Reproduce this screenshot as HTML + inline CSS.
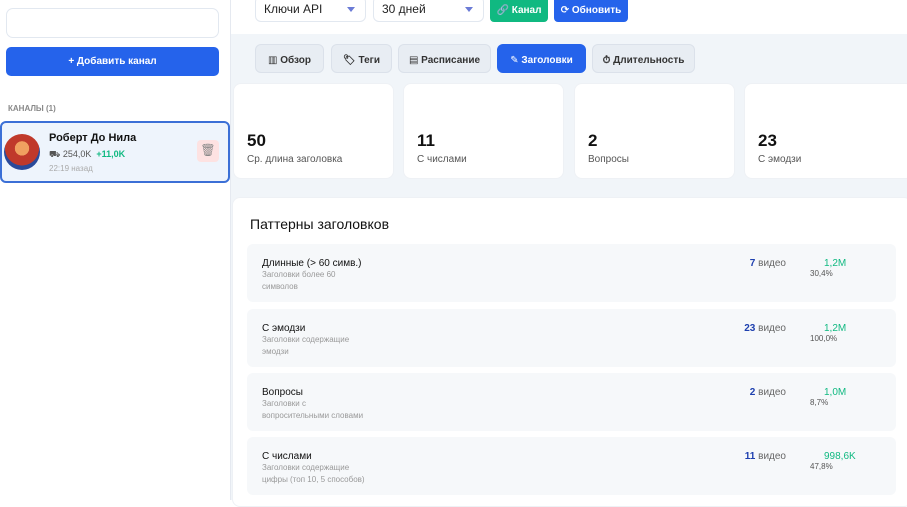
<!DOCTYPE html>
<html><head><meta charset="utf-8"><style>
*{box-sizing:border-box;margin:0;padding:0}
body{width:907px;height:500px;overflow:hidden;font-family:"Liberation Sans","DejaVu Sans",sans-serif;background:#fff;position:relative;color:#111}
.abs{position:absolute}
.side{left:0;top:0;width:231px;height:500px;background:#fff;border-right:1px solid #e5e9f0}
.main{left:231px;top:34px;width:676px;height:466px;background:#f1f5f9}
.sel{top:-4px;height:26px;border:1px solid #e2e8f0;border-radius:6px;background:#fff;font-size:12px;line-height:24px;padding-left:8px;color:#222}
.sel i{position:absolute;right:10px;top:10px;width:0;height:0;border-left:4px solid transparent;border-right:4px solid transparent;border-top:5px solid #6b7bd6}
.btn{top:-4px;height:26px;border-radius:4px;color:#fff;font-size:10px;font-weight:bold;line-height:30px;text-align:center}
.tab{top:44px;height:29px;border:1px solid #dbe1ea;border-radius:6px;background:#e8edf3;font-size:10px;font-weight:bold;color:#333;text-align:center;line-height:31px}
.tab.on{background:#2563eb;color:#fff;border-color:#2563eb}
.card{top:83px;height:96px;background:#fff;border-radius:8px;border:1px solid #eef1f5}
.card b{position:absolute;left:13px;top:47px;font-size:17px}
.card span{position:absolute;left:13px;top:70px;font-size:10px;color:#555}
.row{left:247px;width:649px;height:58px;background:#f6f8fa;border-radius:6px}
.row .t{position:absolute;left:15px;top:14px;font-size:10px;color:#111}
.row .d{position:absolute;left:15px;top:25px;font-size:8px;color:#999;line-height:12px;width:110px}
.row .v{position:absolute;right:110px;top:14px;font-size:10px;color:#666}
.row .v b{color:#1e40af}
.row .g{position:absolute;left:577px;top:14px;font-size:10px;color:#10b981}
.row .p{position:absolute;left:563px;top:25px;font-size:8px;color:#555}
</style></head><body>
<div class="abs side"></div>
<div class="abs" style="left:6px;top:8px;width:213px;height:30px;border:1px solid #e2e8f0;border-radius:7px"></div>
<div class="abs" style="left:6px;top:47px;width:213px;height:29px;background:#2563eb;border-radius:5px;color:#fff;font-size:10px;font-weight:bold;text-align:center;line-height:30px">+ Добавить канал</div>
<div class="abs" style="left:8px;top:104px;font-size:8px;color:#888;font-weight:bold">КАНАЛЫ (1)</div>
<div class="abs" style="left:0;top:121px;width:230px;height:62px;background:#eef4fc;border:2px solid #3b6fd6;border-radius:6px"></div>
<div class="abs" style="left:4px;top:134px;width:36px;height:36px;border-radius:50%;background:radial-gradient(circle at 50% 40%,#f0a060 0 25%,#c0392b 26% 60%,#2a4a9a 61%)"></div>
<div class="abs" style="left:49px;top:132px;font-size:11px;font-weight:bold">Роберт До Нила</div>
<div class="abs" style="left:49px;top:149px;font-size:9px;color:#555">⛟ 254,0K &nbsp;<span style="color:#10b981;font-weight:bold">+11,0K</span></div>
<div class="abs" style="left:49px;top:164px;font-size:8px;color:#aaa">22:19 назад</div>
<div class="abs" style="left:197px;top:140px;width:22px;height:22px;background:#fde2e2;border-radius:4px;text-align:center;font-size:12px;padding-top:3px;color:#888">🗑</div>

<div class="abs main"></div>
<div class="abs sel" style="left:255px;width:111px">Ключи API<i></i></div>
<div class="abs sel" style="left:373px;width:111px">30 дней<i></i></div>
<div class="abs btn" style="left:490px;width:58px;background:#10b981">🔗 Канал</div>
<div class="abs btn" style="left:554px;width:74px;background:#2563eb">⟳ Обновить</div>

<div class="abs tab" style="left:255px;width:69px">▥ Обзор</div>
<div class="abs tab" style="left:331px;width:61px">🏷 Теги</div>
<div class="abs tab" style="left:398px;width:93px">▤ Расписание</div>
<div class="abs tab on" style="left:497px;width:89px">✎ Заголовки</div>
<div class="abs tab" style="left:592px;width:103px">⏱ Длительность</div>

<div class="abs card" style="left:233px;width:161px"><b>50</b><span>Ср. длина заголовка</span></div>
<div class="abs card" style="left:403px;width:161px"><b>11</b><span>С числами</span></div>
<div class="abs card" style="left:574px;width:161px"><b>2</b><span>Вопросы</span></div>
<div class="abs card" style="left:744px;width:170px"><b>23</b><span>С эмодзи</span></div>

<div class="abs" style="left:232px;top:197px;width:680px;height:310px;background:#fff;border-radius:8px;border:1px solid #eef1f5"></div>
<div class="abs" style="left:250px;top:216px;font-size:14px">Паттерны заголовков</div>

<div class="abs row" style="top:244px"><div class="t">Длинные (&gt; 60 симв.)</div><div class="d">Заголовки более 60 символов</div><div class="v"><b>7</b> видео</div><div class="g">1,2M</div><div class="p">30,4%</div></div>
<div class="abs row" style="top:309px"><div class="t">С эмодзи</div><div class="d">Заголовки содержащие эмодзи</div><div class="v"><b>23</b> видео</div><div class="g">1,2M</div><div class="p">100,0%</div></div>
<div class="abs row" style="top:373px"><div class="t">Вопросы</div><div class="d">Заголовки с вопросительными словами</div><div class="v"><b>2</b> видео</div><div class="g">1,0M</div><div class="p">8,7%</div></div>
<div class="abs row" style="top:437px"><div class="t">С числами</div><div class="d">Заголовки содержащие цифры (топ 10, 5 способов)</div><div class="v"><b>11</b> видео</div><div class="g">998,6K</div><div class="p">47,8%</div></div>
</body></html>
